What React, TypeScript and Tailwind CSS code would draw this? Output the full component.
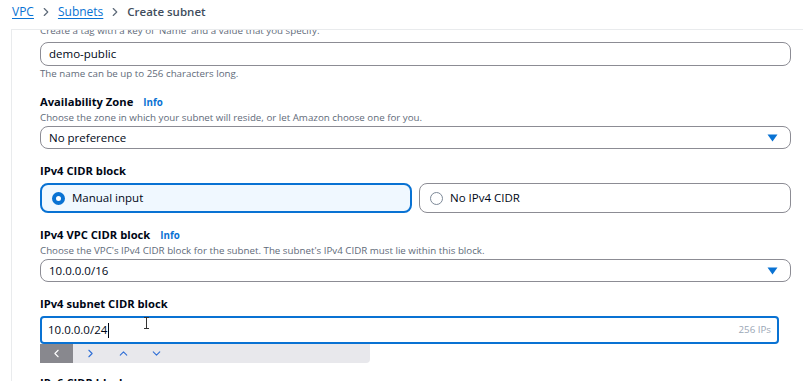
import React from 'react';
import { ChevronRight, ChevronLeft, ChevronUp, ChevronDown } from 'lucide-react';

const font = { fontFamily: '"Open Sans", "Noto Sans", Arial, sans-serif' };

const Caret = () => (
  <svg width="11" height="8" viewBox="0 0 11 8" className="shrink-0">
    <path d="M0.5 0.5 H10.5 L5.5 7.5 Z" fill="#0972d3" />
  </svg>
);

const Info = () => <span className="ml-[10px] text-[9.75px] font-bold text-[#0972d3]">Info</span>;

const Label: React.FC<{ children: React.ReactNode; info?: boolean }> = ({ children, info }) => (
  <div className="flex items-baseline text-[11.2px] font-bold leading-[16px] text-[#000716]">
    <span>{children}</span>
    {info && <Info />}
  </div>
);

const Desc: React.FC<{ children: React.ReactNode }> = ({ children }) => (
  <div className="text-[9.75px] leading-[14px] text-[#5f6b7a]">{children}</div>
);

const Select: React.FC<{ value: string }> = ({ value }) => (
  <div className="flex h-[23px] w-[751px] items-center justify-between rounded-[8px] border border-[#8c8c94] bg-white pl-[8px] pr-[12px] text-[11.5px] text-[#000716]">
    <span>{value}</span>
    <Caret />
  </div>
);

export default function App() {
  return (
    <div style={font} className="h-[381px] w-[803px] overflow-hidden bg-white">
      {/* Breadcrumb */}
      <div className="flex h-[29px] items-center pb-[6px] pl-[12px] text-[12px] leading-none">
        <span className="text-[#0972d3] underline underline-offset-2">VPC</span>
        <ChevronRight className="mx-[5px] h-[14px] w-[14px] text-[#5f6b7a]" strokeWidth={2} />
        <span className="text-[#0972d3] underline underline-offset-2">Subnets</span>
        <ChevronRight className="mx-[5px] h-[14px] w-[14px] text-[#5f6b7a]" strokeWidth={2} />
        <span className="text-[11.5px] font-semibold text-[#414d5c]">Create subnet</span>
      </div>

      {/* Panel */}
      <div className="ml-[11px] h-[352px] overflow-hidden border-l border-t border-[#e9ebed] bg-white">
        <div className="-mt-[6px] pl-[28px]">
          <Desc>Create a tag with a key of 'Name' and a value that you specify.</Desc>
          <div className="mt-[4px] flex h-[24px] w-[751px] items-center rounded-[8px] border border-[#8c8c94] pl-[8px] text-[11.5px] text-[#000716]">
            demo-public
          </div>
          <div className="mt-[1px]">
            <Desc>The name can be up to 256 characters long.</Desc>
          </div>

          <div className="mt-[13px]">
            <Label info>Availability Zone</Label>
            <Desc>Choose the zone in which your subnet will reside, or let Amazon choose one for you.</Desc>
            <div className="mt-[1px]">
              <Select value="No preference" />
            </div>
          </div>

          <div className="mt-[14px]">
            <Label>IPv4 CIDR block</Label>
            <div className="mt-[4px] flex gap-[7px]">
              <div className="flex h-[30px] w-[372px] items-center rounded-[8px] border-2 border-[#0972d3] bg-[#f0f8ff] pl-[10px] text-[11.5px] text-[#000716]">
                <span className="mr-[7px] h-[13px] w-[13px] rounded-full border-[4px] border-[#0972d3] bg-white" />
                Manual input
              </div>
              <div className="flex h-[30px] w-[372px] items-center rounded-[8px] border border-[#8c8c94] bg-white pl-[10px] text-[11.5px] text-[#000716]">
                <span className="mr-[7px] h-[13px] w-[13px] rounded-full border border-[#7d8998] bg-white" />
                No IPv4 CIDR
              </div>
            </div>
          </div>

          <div className="mt-[14px]">
            <Label info>IPv4 VPC CIDR block</Label>
            <Desc>Choose the VPC's IPv4 CIDR block for the subnet. The subnet's IPv4 CIDR must lie within this block.</Desc>
            <div className="mt-[1px]">
              <Select value="10.0.0.0/16" />
            </div>
          </div>

          <div className="mt-[14px]">
            <Label>IPv4 subnet CIDR block</Label>
            <div className="relative mt-[4px] flex h-[28px] w-[739px] items-center justify-between rounded-[4px] border-2 border-[#0972d3] bg-white pl-[6px] pr-[6px] text-[11.5px] text-[#000716]">
              <span className="flex items-center">
                10.0.0.0/24<span className="ml-[1px] h-[15px] w-[1px] bg-[#000716]" />
              </span>
              <span className="text-[9.75px] text-[#9ba7b6]">256 IPs</span>
              <svg width="7" height="12" viewBox="0 0 7 12" className="absolute left-[101px] top-[-1px]">
                <path d="M1 0.5 H6 M3.5 0.5 V11.5 M1 11.5 H6" stroke="#333" strokeWidth="1" fill="none" />
              </svg>
            </div>
            <div className="flex h-[19px] w-[330px] items-center rounded-b-[4px] bg-[#e8e8ec]">
              <div className="flex h-full w-[33px] items-center justify-center bg-[#88888e]">
                <ChevronLeft className="h-[13px] w-[13px] text-white" strokeWidth={2} />
              </div>
              <div className="ml-[11px] flex items-center gap-[20px] text-[#2f6fd6]">
                <ChevronRight className="h-[13px] w-[13px]" strokeWidth={2} />
                <ChevronUp className="h-[13px] w-[13px]" strokeWidth={2} />
                <ChevronDown className="h-[13px] w-[13px]" strokeWidth={2} />
              </div>
            </div>
          </div>

          <div className="mt-[12px]">
            <Label>IPv6 CIDR block</Label>
          </div>
        </div>
      </div>
    </div>
  );
}
